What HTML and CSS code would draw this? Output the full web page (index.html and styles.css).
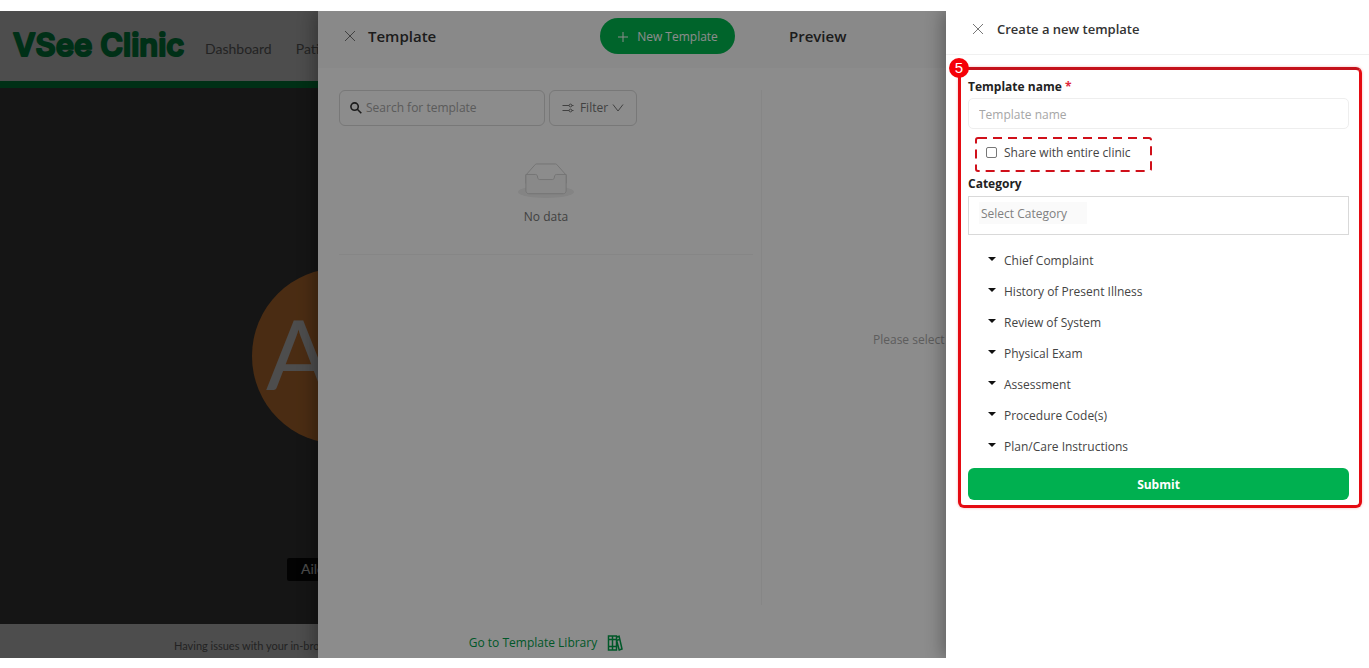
FILE: index.html
```html
<!DOCTYPE html>
<html lang="en">
<head>
<meta charset="utf-8">
<title>VSee Clinic</title>
<link rel="stylesheet" href="styles.css">
</head>
<body>
<div class="app">
  <div class="clinic">
    <header class="topbar">
      <svg class="logo" width="172" height="40" role="img" aria-label="VSee Clinic"><text x="2" y="30">VSee Clinic</text></svg>
      <nav class="nav">
        <a href="#">Dashboard</a>
        <a href="#">Patients</a>
      </nav>
    </header>
    <main class="stage">
      <div class="avatar">AM</div>
      <div class="caller">Aile</div>
    </main>
    <footer class="help">Having issues with your in-browser</footer>
  </div>

  <div class="mask"></div>

  <section class="drawer templates" aria-label="Template">
    <div class="col list-col">
      <header class="bar">
        <button class="close" type="button" aria-label="Close">
          <svg width="12" height="12" viewBox="0 0 12 12"><path d="M1 1l10 10M11 1L1 11"/></svg>
        </button>
        <h2 class="title">Template</h2>
        <button class="new" type="button">
          <svg width="12" height="12" viewBox="0 0 12 12"><path d="M6 1v10M1 6h10"/></svg>
          New Template
        </button>
      </header>
      <div class="list-body">
        <div class="tools">
          <label class="search">
            <svg width="12" height="12" viewBox="0 0 12 12"><circle cx="4.6" cy="4.6" r="3.7"/><path d="M7.3 7.3l4 4"/></svg>
            <input type="text" placeholder="Search for template" aria-label="Search for template">
          </label>
          <button class="filter" type="button">
            <svg width="12" height="12" viewBox="0 0 12 12"><path d="M0.5 3.5h11M0.5 8.5h11"/><circle cx="8.500" cy="3.500" r="1.400" fill="#fff"/><circle cx="8.500" cy="8.500" r="1.400" fill="#fff"/></svg>
            <span>Filter</span>
            <svg class="chev" width="12" height="12" viewBox="0 0 12 12"><path d="M1 2.500l5 6.500 5-6.500"/></svg>
          </button>
        </div>
        <div class="empty">
          <svg width="56" height="36" viewBox="0 0 64 41">
            <ellipse cx="32" cy="33" rx="32" ry="7" fill="#f0f0f0" stroke="none"/>
            <g fill="none" stroke="#cfcfcf">
              <path d="M55 12.76L44.854 1.258C44.367.474 43.656 0 42.907 0H21.093c-.749 0-1.46.474-1.947 1.257L9 12.761V22h46v-9.24z" transform="translate(0 1)" fill="#fff"/>
              <path d="M41.613 15.931c0-1.605.994-2.93 2.227-2.931H55v18.137C55 33.26 53.68 35 52.05 35h-40.1C10.32 35 9 33.259 9 31.137V13h11.16c1.233 0 2.227 1.323 2.227 2.928v.022c0 1.605 1.005 2.901 2.237 2.901h14.752c1.232 0 2.237-1.308 2.237-2.913v-.007z" fill="#fafafa"/>
            </g>
          </svg>
          <p>No data</p>
        </div>
        <a class="library" href="#">
          Go to Template Library
          <svg width="16" height="16" viewBox="0 0 16 16"><path d="M1.500 1h4v14h-4zM5.500 1h4v14h-4zM1.500 4.500h8M1.500 11.500h8M9.500 2.200l2.600-.9L15 14l-2.800 1-2.700-10M10.200 5.200l2.600-.8"/></svg>
        </a>
      </div>
    </div>
    <div class="col preview-col">
      <header class="bar preview-bar"><h2 class="title">Preview</h2></header>
      <div class="preview-body">Please select a template</div>
    </div>
  </section>

  <div class="mask"></div>

  <section class="drawer create" aria-label="Create a new template">
    <header class="create-bar">
      <button class="close" type="button" aria-label="Close">
        <svg width="12" height="12" viewBox="0 0 12 12"><path d="M1 1l10 10M11 1L1 11"/></svg>
      </button>
      <h2 class="create-title">Create a new template</h2>
    </header>
    <form class="form">
      <span class="step">5</span>
      <label class="label" for="tname">Template name <span class="req">*</span></label>
      <input class="text" id="tname" type="text" placeholder="Template name">
      <div class="share">
        <svg class="dashes" width="100%" height="100%"><rect x="1" y="1" width="175" height="33" rx="2"/></svg>
        <input id="share" type="checkbox">
        <label for="share">Share with entire clinic</label>
      </div>
      <label class="label" for="cat">Category</label>
      <div class="combo"><input id="cat" type="text" role="combobox" aria-expanded="true" aria-controls="cats" placeholder="Select Category"></div>
      <ul class="cats" id="cats">
        <li><button type="button">Chief Complaint</button></li>
        <li><button type="button">History of Present Illness</button></li>
        <li><button type="button">Review of System</button></li>
        <li><button type="button">Physical Exam</button></li>
        <li><button type="button">Assessment</button></li>
        <li><button type="button">Procedure Code(s)</button></li>
        <li><button type="button">Plan/Care Instructions</button></li>
      </ul>
      <button class="submit" type="submit">Submit</button>
    </form>
  </section>
</div>
</body>
</html>
```
FILE: styles.css
```css
* { box-sizing: border-box; }

body {
  margin: 0;
  padding: 11px 0 10px;
  height: 100vh;
  min-height: 540px;
  background: #fff;
  font: 13px/20px "Open Sans", "Noto Sans", sans-serif;
  color: #444;
}

button, input { font: inherit; color: inherit; }
button { border: 0; padding: 0; background: none; cursor: pointer; }
input::placeholder { color: #a6a6a6; opacity: 1; }
svg { flex: none; fill: none; stroke: currentColor; }
h2, p, ul { margin: 0; padding: 0; }
a { text-decoration: none; color: inherit; }

.app { position: relative; height: 100%; overflow: hidden; }

/* Call page */
.clinic { display: flex; flex-direction: column; height: 100%; font-family: Lato, sans-serif; }
.topbar {
  display: flex;
  align-items: center;
  gap: 22px;
  height: 77px;
  padding-left: 11px;
  border-bottom: 7px solid #00a04a;
  background: #fff;
}
.logo {
  overflow: visible;
  font: 600 31px Inter, sans-serif;
  fill: #00a04e;
  stroke: #00a04e;
  stroke-width: 2px;
  stroke-linejoin: round;
}
.nav { display: flex; gap: 24px; padding-top: 6px; font-size: 14px; color: #777; }
.stage {
  flex: 1;
  display: grid;
  place-items: center;
  position: relative;
  width: 680px;
  max-width: 100%;
  background: #474747;
  box-shadow: 800px 0 #474747;
}
.avatar {
  display: grid;
  place-items: center;
  width: 176px;
  height: 176px;
  padding: 0 0 6px 6px;
  border-radius: 50%;
  background: #f79441;
  color: #fff;
  font-size: 96px;
  line-height: 96px;
}
.caller {
  position: absolute;
  bottom: 43px;
  width: 106px;
  height: 23px;
  padding-left: 14px;
  border-radius: 2px;
  background: #0c0c0c;
  color: #fff;
  font-size: 14px;
  line-height: 22px;
}
.help { height: 34px; padding: 12px 0 0 174px; background: #fff; font-size: 11px; color: #777; }

.mask { position: absolute; inset: 0; background: rgba(0, 0, 0, .45); }

.drawer { position: absolute; top: 0; right: 0; bottom: 0; background: #fff; box-shadow: -4px 0 16px rgba(0, 0, 0, .3); }
.close { display: flex; color: #777; }

/* Template list */
.templates { display: grid; grid-template-columns: 443px 1fr; width: 1051px; }
.col { display: flex; flex-direction: column; }
.bar { display: flex; align-items: center; height: 57px; padding: 0 26px 8px; background: #fafafa; }
.title { margin-left: 12px; font-size: 15px; font-weight: 600; color: #333; }
.new {
  display: flex;
  align-items: center;
  justify-content: center;
  gap: 8px;
  width: 135px;
  height: 36px;
  padding-top: 2px;
  margin-left: auto;
  border-radius: 18px;
  background: #00b64f;
  color: #fff;
  font-size: 12px;
}
.list-body { flex: 1; display: flex; flex-direction: column; padding: 22px 8px 5px 21px; }
.tools { display: flex; gap: 4px; }
.search, .filter { display: flex; align-items: center; height: 36px; border: 1px solid #dadada; border-radius: 6px; }
.search { gap: 4px; width: 206px; padding: 0 10px; color: #333; }
.search svg { stroke-width: 1.6; }
.search input { flex: 1; min-width: 0; padding: 0; border: 0; background: none; outline: 0; font-size: 12px; }
.filter { justify-content: center; gap: 6px; width: 88px; color: #777; font-size: 12px; }
.filter span { margin-right: -2px; }
.empty {
  display: flex;
  flex-direction: column;
  align-items: center;
  gap: 8px;
  padding: 37px 0 27px;
  border-bottom: 1px solid #f4f4f4;
  color: #777;
  font-size: 12px;
}
.library { display: flex; align-items: center; justify-content: center; gap: 10px; margin-top: auto; font-size: 12px; color: #00a04a; }
.library svg { stroke-width: 1.5; }
.preview-bar { padding-left: 16px; }
.preview-body {
  flex: 1;
  display: flex;
  align-items: center;
  margin: 22px 0 53px;
  padding: 0 0 16px 111px;
  border-left: 1px solid #f4f4f4;
  color: #aaa;
  font-size: 12px;
}

/* New template form */
.create { width: 423px; padding: 0 7px 0 12px; }
.create-bar { display: flex; align-items: center; gap: 13px; height: 44px; margin: 0 -7px 12px -12px; padding: 0 26px 8px; border-bottom: 1px solid #f0f0f0; }
.create-title { font-size: 13px; font-weight: 600; color: #333; }
.form {
  position: relative;
  display: flex;
  flex-direction: column;
  padding: 7px 10px 5px 7px;
  border: 3px solid #e50b12;
  border-top-color: #c4121b;
  border-radius: 6px;
  box-shadow: 0 0 3px #f5b5b5;
}
.step {
  position: absolute;
  top: -12px;
  left: -12px;
  width: 20px;
  height: 20px;
  border-radius: 50%;
  background: #f50008;
  color: #fff;
  font: 15px/20px "Liberation Sans", sans-serif;
  text-align: center;
}
.label { font-size: 12px; line-height: 20px; font-weight: 700; color: #222; }
.req { color: #e0283c; }
.text { height: 31px; margin: 1px 0 8px; padding: 1px 10px 0; border: 1px solid #eee; border-radius: 5px; outline: 0; font-size: 12px; }
.share { position: relative; display: flex; align-items: center; gap: 7px; width: 177px; height: 35px; margin: 0 0 2px 7px; padding: 0 0 4px 11px; font-size: 12px; }
.dashes { position: absolute; inset: 0; stroke: #d0101a; stroke-width: 2; stroke-dasharray: 9 6; }
.share input { appearance: none; width: 11px; height: 11px; margin: 0; border: 1px solid #777; border-radius: 2px; background: #fff; }
.combo { height: 39px; margin-top: 2px; padding: 5px 10px; border: 1px solid #d9d9d9; }
.combo input { width: 108px; height: 22px; padding: 1px 2px 0; border: 0; background: #fafafa; outline: 0; font-size: 12px; }
.combo input::placeholder { color: #808080; }
.cats { margin: 10px 0 6px; list-style: none; }
.cats button { display: flex; align-items: center; gap: 8px; width: 100%; height: 31px; padding-left: 20px; font-size: 12px; }
.cats button::before { content: ""; margin-top: -4px; border: 4px solid transparent; border-top-color: #111; border-bottom: 0; }
.submit { height: 32px; padding-top: 2px; border-radius: 6px; background: #00b050; color: #fff; font-size: 12px; font-weight: 700; }
```
